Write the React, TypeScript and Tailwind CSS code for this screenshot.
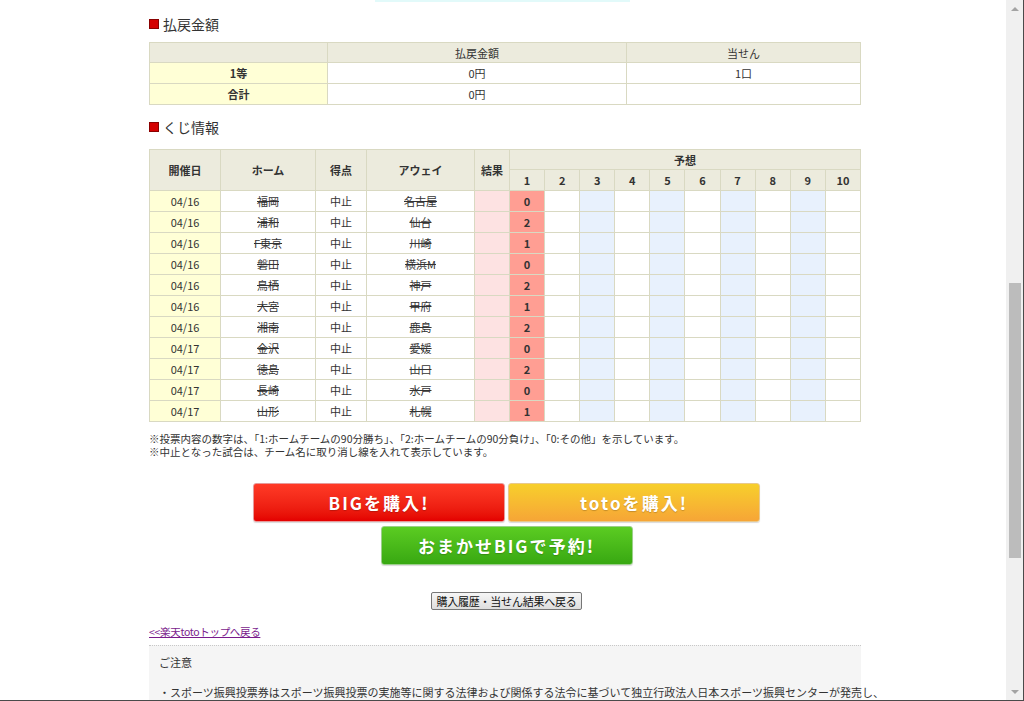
import React from 'react';

type Match = { date: string; home: string; away: string; result: string };

const matches: Match[] = [
  { date: '04/16', home: '福岡', away: '名古屋', result: '0' },
  { date: '04/16', home: '浦和', away: '仙台', result: '2' },
  { date: '04/16', home: 'F東京', away: '川崎', result: '1' },
  { date: '04/16', home: '磐田', away: '横浜M', result: '0' },
  { date: '04/16', home: '鳥栖', away: '神戸', result: '2' },
  { date: '04/16', home: '大宮', away: '甲府', result: '1' },
  { date: '04/16', home: '湘南', away: '鹿島', result: '2' },
  { date: '04/17', home: '金沢', away: '愛媛', result: '0' },
  { date: '04/17', home: '徳島', away: '山口', result: '2' },
  { date: '04/17', home: '長崎', away: '水戸', result: '0' },
  { date: '04/17', home: '山形', away: '札幌', result: '1' },
];

const cols = [1, 2, 3, 4, 5, 6, 7, 8, 9, 10];

const cell = 'border border-[#d9d9c2] h-[21px] p-0 text-center align-middle';
const head = 'border border-[#d9d9c2] bg-[#ecebdd] p-0 text-center align-middle';

function SectionTitle({ label }: { label: string }) {
  return (
    <div className="flex items-center gap-[4px] h-[16px]">
      <span className="w-[10px] h-[10px] bg-[#d40000] border border-[#8a0000] shrink-0" />
      <span className="text-[14px] leading-[16px] text-[#333]">{label}</span>
    </div>
  );
}

function PayoutTable() {
  return (
    <table className="w-[712px] table-fixed border-collapse text-[11px] leading-[14px] text-[#333]">
      <colgroup>
        <col className="w-[178px]" />
        <col className="w-[299px]" />
        <col />
      </colgroup>
      <tbody>
        <tr>
          <td className={`${head} h-[20px]`} />
          <td className={`${head} h-[20px]`}>払戻金額</td>
          <td className={`${head} h-[20px]`}>当せん</td>
        </tr>
        <tr>
          <td className={`${cell} bg-[#ffffd6] font-bold`}>1等</td>
          <td className={cell}>0円</td>
          <td className={cell}>1口</td>
        </tr>
        <tr>
          <td className={`${cell} bg-[#ffffd6] font-bold`}>合計</td>
          <td className={cell}>0円</td>
          <td className={cell} />
        </tr>
      </tbody>
    </table>
  );
}

function LotteryTable() {
  return (
    <table className="w-[712px] table-fixed border-collapse text-[11px] leading-[14px] text-[#333]">
      <colgroup>
        <col className="w-[71px]" />
        <col className="w-[95px]" />
        <col className="w-[51px]" />
        <col className="w-[108px]" />
        <col className="w-[35px]" />
        {cols.map((c) => (
          <col key={c} />
        ))}
      </colgroup>
      <thead>
        <tr>
          <th rowSpan={2} className={`${head} font-bold`}>開催日</th>
          <th rowSpan={2} className={`${head} font-bold`}>ホーム</th>
          <th rowSpan={2} className={`${head} font-bold`}>得点</th>
          <th rowSpan={2} className={`${head} font-bold`}>アウェイ</th>
          <th rowSpan={2} className={`${head} font-bold`}>結果</th>
          <th colSpan={10} className={`${head} h-[20px] font-bold`}>予想</th>
        </tr>
        <tr>
          {cols.map((c) => (
            <th key={c} className={`${head} h-[21px] font-bold`}>{c}</th>
          ))}
        </tr>
      </thead>
      <tbody>
        {matches.map((m, i) => (
          <tr key={i}>
            <td className={`${cell} bg-[#ffffd6]`}>{m.date}</td>
            <td className={`${cell} line-through`}>{m.home}</td>
            <td className={cell}>中止</td>
            <td className={`${cell} line-through`}>{m.away}</td>
            <td className={`${cell} bg-[#fde2e2]`} />
            {cols.map((c) => (
              <td
                key={c}
                className={`${cell} ${
                  c === 1 ? 'bg-[#ff9e93] font-bold' : c % 2 === 1 ? 'bg-[#e8f1fd]' : 'bg-white'
                }`}
              >
                {c === 1 ? m.result : ''}
              </td>
            ))}
          </tr>
        ))}
      </tbody>
    </table>
  );
}

function BuyButton({ label, tone }: { label: string; tone: 'red' | 'orange' | 'green' }) {
  const tones = {
    red: 'bg-gradient-to-b from-[#ff3a26] to-[#e40000] border-[#e79a9a]',
    orange: 'bg-gradient-to-b from-[#f7cf2b] to-[#f6a536] border-[#e9c98c]',
    green: 'bg-gradient-to-b from-[#5bcc22] to-[#38a812] border-[#9bcf8a]',
  };
  return (
    <button
      className={`w-[252px] h-[39px] rounded-[3px] border ${tones[tone]} text-white font-bold text-[17px] tracking-[0.12em] [text-shadow:0_1px_1px_rgba(0,0,0,0.2)] shadow-[0_1px_1px_rgba(0,0,0,0.15)]`}
    >
      {label}
    </button>
  );
}

function Scrollbar() {
  return (
    <div className="w-[17px] h-full bg-[#f0f0f0] flex flex-col items-center shrink-0">
      <div className="h-[17px] flex items-center justify-center">
        <span className="w-0 h-0 border-l-[4px] border-r-[4px] border-b-[4px] border-l-transparent border-r-transparent border-b-[#a3a3a3]" />
      </div>
      <div className="h-[266px]" />
      <div className="w-[12px] h-[275px] bg-[#bcbcbc]" />
      <div className="flex-1" />
      <div className="h-[17px] flex items-center justify-center">
        <span className="w-0 h-0 border-l-[4px] border-r-[4px] border-t-[4px] border-l-transparent border-r-transparent border-t-[#a3a3a3]" />
      </div>
    </div>
  );
}

export default function App() {
  return (
    <div className="w-[1024px] h-[701px] flex overflow-hidden bg-white border-r border-b border-[#4a4a4a] font-['Noto_Sans_CJK_JP',sans-serif]">
      <div className="flex-1 overflow-hidden">
        <div className="ml-[149px] w-[712px]">
          {/* tail of the panel above */}
          <div className="ml-[226px] w-[255px] h-[2px] bg-[#e2fafa]" />

          <div className="pt-[14px]">
            <SectionTitle label="払戻金額" />
          </div>
          <div className="mt-[10px]">
            <PayoutTable />
          </div>

          <div className="mt-[14px]">
            <SectionTitle label="くじ情報" />
          </div>
          <div className="mt-[14px]">
            <LotteryTable />
          </div>

          <div className="mt-[10px] text-[10.5px] leading-[13px] text-[#333]">
            <p>※投票内容の数字は、「1:ホームチームの90分勝ち」、「2:ホームチームの90分負け」、「0:その他」を示しています。</p>
            <p>※中止となった試合は、チーム名に取り消し線を入れて表示しています。</p>
          </div>

          <div className="mt-[25px] flex flex-col items-center gap-[4px] pl-[3px]">
            <div className="flex gap-[3px]">
              <BuyButton label="BIGを購入!" tone="red" />
              <BuyButton label="totoを購入!" tone="orange" />
            </div>
            <BuyButton label="おまかせBIGで予約!" tone="green" />
          </div>

          <div className="mt-[27px] flex justify-center pl-[3px]">
            <button className="h-[18px] px-[4px] border border-[#767676] rounded-[2px] bg-gradient-to-b from-[#f6f6f6] to-[#dedede] text-[11px] leading-[14px] text-[#111] tracking-[-0.02em]">
              購入履歴・当せん結果へ戻る
            </button>
          </div>

          <div className="mt-[7px]">
            <a href="#" className="text-[10.5px] leading-[14px] text-[#7a1a8c] underline tracking-[-0.03em]">
              &lt;&lt;楽天totoトップへ戻る
            </a>
          </div>

          <div className="mt-[4px] border-t border-dotted border-[#c8c8c8] bg-[#f5f5f5] px-[10px] pt-[9px] pb-[20px] text-[11px] leading-[14px] text-[#333]">
            <p>ご注意</p>
            <p className="mt-[16px] whitespace-nowrap">
              ・スポーツ振興投票券はスポーツ振興投票の実施等に関する法律および関係する法令に基づいて独立行政法人日本スポーツ振興センターが発売し、
            </p>
          </div>
        </div>
      </div>
      <Scrollbar />
    </div>
  );
}
